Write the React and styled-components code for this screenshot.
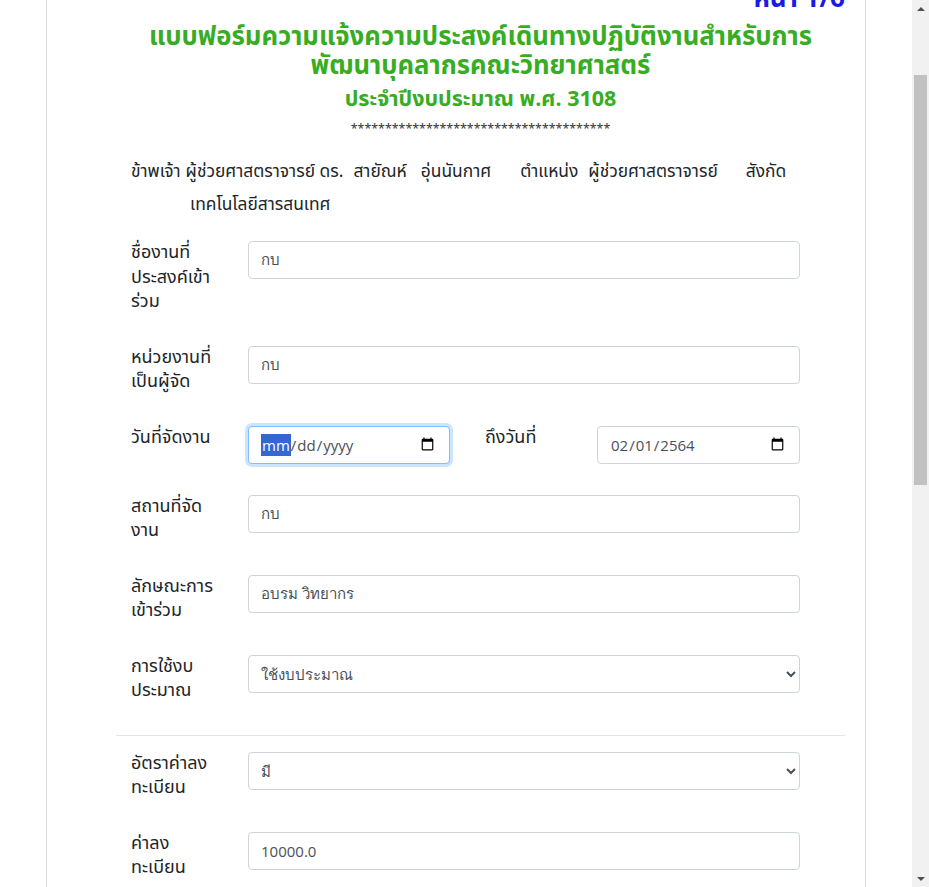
import React, { useLayoutEffect, useRef } from "react";
import styled, { createGlobalStyle } from "styled-components";

const GlobalStyle = createGlobalStyle`
    html, body {
        margin: 0;
        padding: 0;
        background: #fff;
        overflow: hidden;
    }
    body {
        font-family: "Segoe UI", "Leelawadee UI", Tahoma, "Noto Sans Thai", "Noto Sans", sans-serif;
        font-size: 16px;
        color: #212529;
    }
    * {
        box-sizing: border-box;
    }
`;

const App = () => {
    const scrollRef = useRef(null);
    const dateRef = useRef(null);

    useLayoutEffect(() => {
        if (dateRef.current) {
            dateRef.current.focus({ preventScroll: true });
        }
        if (scrollRef.current) {
            scrollRef.current.scrollTop = 125;
        }
    }, []);

    return (
        <>
            <GlobalStyle />
            <Window>
                <Viewport ref={scrollRef}>
                    <Card>
                        <PageNo>หน้า 1/6</PageNo>
                        <Title>
                            แบบฟอร์มความแจ้งความประสงค์เดินทางปฏิบัติงานสำหรับการ
                            <br />
                            พัฒนาบุคลากรคณะวิทยาศาสตร์
                        </Title>
                        <SubTitle>ประจำปีงบประมาณ พ.ศ. 3108</SubTitle>
                        <Stars>**************************************</Stars>

                        <Intro>
                            <IntroLine>
                                <Word>ข้าพเจ้า</Word>
                                <Word space={5}>ผู้ช่วยศาสตราจารย์ ดร.</Word>
                                <Word space={10}>สายัณห์</Word>
                                <Word space={14}>อุ่นนันกาศ</Word>
                                <Word space={29}>ตำแหน่ง</Word>
                                <Word space={10}>ผู้ช่วยศาสตราจารย์</Word>
                                <Word space={28}>สังกัด</Word>
                            </IntroLine>
                            <IntroLine indent={59}>
                                <Word>เทคโนโลยีสารสนเทศ</Word>
                            </IntroLine>
                        </Intro>

                        <FieldRow>
                            <Label>
                                ชื่องานที่
                                <br />
                                ประสงค์เข้า
                                <br />
                                ร่วม
                            </Label>
                            <Input type="text" defaultValue="กบ" />
                        </FieldRow>

                        <FieldRow>
                            <Label>
                                หน่วยงานที่
                                <br />
                                เป็นผู้จัด
                            </Label>
                            <Input type="text" defaultValue="กบ" />
                        </FieldRow>

                        <DateRow>
                            <Label>วันที่จัดงาน</Label>
                            <Input type="date" ref={dateRef} />
                            <ToLabel>ถึงวันที่</ToLabel>
                            <Input type="date" defaultValue="2564-02-01" />
                        </DateRow>

                        <FieldRow>
                            <Label>
                                สถานที่จัด
                                <br />
                                งาน
                            </Label>
                            <Input type="text" defaultValue="กบ" />
                        </FieldRow>

                        <FieldRow>
                            <Label>
                                ลักษณะการ
                                <br />
                                เข้าร่วม
                            </Label>
                            <Input type="text" defaultValue="อบรม วิทยากร" />
                        </FieldRow>

                        <FieldRow>
                            <Label>
                                การใช้งบ
                                <br />
                                ประมาณ
                            </Label>
                            <Select defaultValue="use">
                                <option value="use">ใช้งบประมาณ</option>
                                <option value="none">ไม่ใช้งบประมาณ</option>
                            </Select>
                        </FieldRow>

                        <Divider />

                        <FieldRow>
                            <Label>
                                อัตราค่าลง
                                <br />
                                ทะเบียน
                            </Label>
                            <Select defaultValue="yes">
                                <option value="yes">มี</option>
                                <option value="no">ไม่มี</option>
                            </Select>
                        </FieldRow>

                        <FieldRow>
                            <Label>
                                ค่าลง
                                <br />
                                ทะเบียน
                            </Label>
                            <Input type="text" defaultValue="10000.0" />
                        </FieldRow>
                    </Card>
                </Viewport>

                <ScrollBar>
                    <ArrowButton>
                        <Arrow />
                    </ArrowButton>
                    <Track>
                        <Thumb />
                    </Track>
                    <ArrowButton>
                        <Arrow down />
                    </ArrowButton>
                </ScrollBar>
            </Window>
        </>
    );
};

export default App;

const Window = styled.div`
    display: flex;
    height: 100vh;
    width: 100%;
`;

const Viewport = styled.div`
    flex: 1;
    overflow-y: auto;
    scrollbar-width: none;
    &::-webkit-scrollbar {
        display: none;
    }
`;

const ScrollBar = styled.div`
    display: flex;
    flex-direction: column;
    width: 17px;
    flex-shrink: 0;
    background: #f1f1f1;
`;

const ArrowButton = styled.div`
    display: flex;
    align-items: center;
    justify-content: center;
    height: 17px;
`;

const Arrow = styled.span`
    width: 0;
    height: 0;
    border-left: 4px solid transparent;
    border-right: 4px solid transparent;
    ${(props) =>
        props.down
            ? "border-top: 4px solid #505050;"
            : "border-bottom: 4px solid #505050;"}
`;

const Track = styled.div`
    flex: 1;
    padding: 0 2px;
`;

const Thumb = styled.div`
    margin-top: 58px;
    height: 410px;
    background: #c1c1c1;
`;

const Card = styled.div`
    width: 820px;
    min-height: 1768px;
    margin: 55px auto 22px;
    padding: 50px 20px 0 69px;
    border: 1px solid #dcdcdc;
    background: #fff;
`;

const PageNo = styled.div`
    text-align: right;
    color: #1a1ae6;
    font-size: 26px;
    font-weight: 700;
    line-height: 36px;
`;

const Title = styled.h3`
    margin: 6px 0 0;
    text-align: center;
    color: #36ad22;
    font-size: 25.7px;
    font-weight: 700;
    line-height: 29px;
`;

const SubTitle = styled.h4`
    margin: 5px 0 0;
    text-align: center;
    color: #36ad22;
    font-size: 21.5px;
    font-weight: 700;
    line-height: 28px;
`;

const Stars = styled.div`
    margin-top: 6px;
    text-align: center;
    color: #333;
    font-size: 12.4px;
    line-height: 20px;
`;

const Intro = styled.div`
    margin: 16px 0 19px;
    padding-left: 15px;
`;

const IntroLine = styled.div`
    display: flex;
    padding-left: ${(props) => props.indent || 0}px;
    line-height: 33px;
    font-size: 17.4px;
`;

const Word = styled.span`
    margin-left: ${(props) => props.space || 0}px;
    white-space: nowrap;
`;

const FieldRow = styled.div`
    display: grid;
    grid-template-columns: 117px 1fr;
    align-items: start;
    padding: 0 45px 0 15px;
    margin-bottom: 31px;
`;

const DateRow = styled(FieldRow)`
    grid-template-columns: 117px 202px 147px 1fr;
`;

const Label = styled.label`
    font-size: 18px;
    line-height: 24.5px;
`;

const ToLabel = styled(Label)`
    padding-left: 35px;
`;

const Input = styled.input`
    width: 100%;
    height: 38px;
    padding: 6px 12px;
    border: 1px solid #ced4da;
    border-radius: 4px;
    font-family: "Segoe UI", "Open Sans", "Noto Sans", sans-serif;
    font-size: 15px;
    color: #495057;
    background: #fff;
    outline: none;

    &:focus {
        border-color: #80bdff;
        box-shadow: 0 0 0 3px rgba(0, 123, 255, 0.2);
    }
`;

const Select = styled.select`
    width: 100%;
    height: 38px;
    padding: 6px 8px;
    border: 1px solid #ced4da;
    border-radius: 4px;
    font-family: "Segoe UI", "Open Sans", "Noto Sans", sans-serif;
    font-size: 15px;
    color: #495057;
    background: #fff;
`;

const Divider = styled.hr`
    margin: 0 0 16px;
    border: 0;
    border-top: 1px solid #e5e5e5;
`;
